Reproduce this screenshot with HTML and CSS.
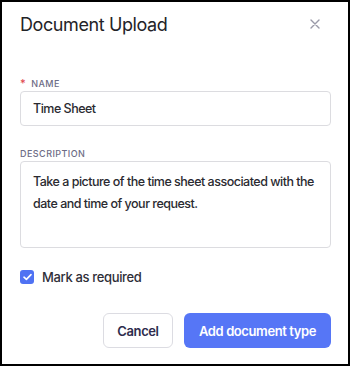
FILE: index.html
```html
<!DOCTYPE html>
<html>
<head>
<meta charset="utf-8">
<link rel="stylesheet" href="styles.css">
</head>
<body>
<div class="modal">
  <div class="header">
    <h1 class="title">Document Upload</h1>
    <button class="close" aria-label="Close">
      <svg width="10" height="10" viewBox="0 0 10 10"><path d="M1 1L9 9M9 1L1 9" stroke="#9a9aa8" stroke-width="1.4" stroke-linecap="round"/></svg>
    </button>
  </div>
  <div class="field field-name">
    <label class="label"><span class="req">*</span>NAME</label>
    <div class="input">Time Sheet</div>
  </div>
  <div class="field field-desc">
    <label class="label">DESCRIPTION</label>
    <div class="textarea">Take a picture of the time sheet associated with the date and time of your request.</div>
  </div>
  <div class="check-row">
    <span class="checkbox">
      <svg width="9" height="8" viewBox="0 0 9 8"><path d="M1 4.2L3.4 6.4L8 1.6" fill="none" stroke="#fff" stroke-width="1.6" stroke-linecap="round" stroke-linejoin="round"/></svg>
    </span>
    <span class="check-label">Mark as required</span>
  </div>
  <div class="actions">
    <button class="btn btn-cancel">Cancel</button>
    <button class="btn btn-primary">Add document type</button>
  </div>
</div>
</body>
</html>
```
FILE: styles.css
```css
* { box-sizing: border-box; }
html, body { margin: 0; padding: 0; background: #fff; }
body { font-family: Inter, "Noto Sans", sans-serif; color: #2b2b33; }
.modal {
  width: 350px;
  height: 366px;
  border: 2px solid #000;
  padding: 0 17px 0 18px;
  display: flex;
  flex-direction: column;
}
.header {
  display: flex;
  align-items: center;
  justify-content: space-between;
  height: 44px;
}
.title {
  margin: 0;
  font-size: 18px;
  font-weight: 400;
  color: #232327;
  letter-spacing: -0.4px;
}
.close {
  border: 0;
  background: none;
  padding: 0;
  margin-right: 11px;
  display: flex;
}
.field { display: flex; flex-direction: column; }
.field-name { margin-top: 32px; }
.field-desc { margin-top: 22px; }
.label {
  font-size: 9px;
  font-weight: 500;
  letter-spacing: 0.45px;
  color: #6d6c85;
  line-height: 11px;
  margin-bottom: 2px;
  display: flex;
  align-items: center;
}
.req { color: #e0454b; margin-right: 5px; font-size: 11px; }
.input, .textarea {
  border: 1px solid #dcdce0;
  border-radius: 4px;
  font-size: 12.5px;
  font-weight: 500;
  letter-spacing: -0.5px;
  color: #2a2a30;
}
.input {
  height: 35px;
  display: flex;
  align-items: center;
  padding: 0 12px;
}
.textarea {
  height: 87px;
  padding: 9px 12px;
  line-height: 22px;
}
.check-row {
  display: flex;
  align-items: center;
  margin-top: 21px;
  gap: 8px;
}
.checkbox {
  width: 14px;
  height: 14px;
  border-radius: 3px;
  background: #4f72f3;
  display: flex;
  align-items: center;
  justify-content: center;
}
.check-label { font-size: 13px; font-weight: 500; letter-spacing: -0.35px; color: #2e2e38; }
.actions {
  display: flex;
  justify-content: flex-end;
  gap: 11px;
  margin-top: 28px;
}
.btn {
  height: 35px;
  border-radius: 6px;
  font-family: Inter, "Noto Sans", sans-serif;
  font-size: 13px;
  font-weight: 600;
  letter-spacing: -0.4px;
  padding: 0;
  white-space: nowrap;
}
.btn-cancel {
  background: #fff;
  border: 1px solid #dcdce2;
  color: #2d2b4d;
  width: 70px;
}
.btn-primary {
  background: #5676f6;
  border: 0;
  color: #fff;
  width: 147px;
}
```
